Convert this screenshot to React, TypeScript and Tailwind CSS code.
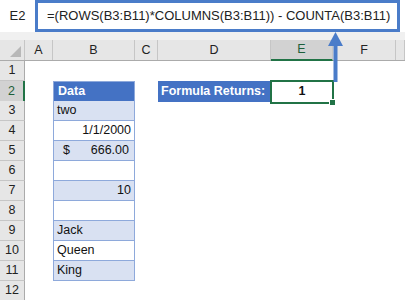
import React from 'react';

const COLS = 'grid grid-cols-[25px_28px_82px_23px_113px_62px_63px_1fr]';
const LETTERS = ['A', 'B', 'C', 'D', 'E', 'F', ''];

type Row = { n: number; b?: React.ReactNode; band?: boolean; head?: boolean };

const rows: Row[] = [
  { n: 1 },
  { n: 2, b: 'Data', head: true },
  { n: 3, b: <span className="pl-[3px]">two</span>, band: true },
  { n: 4, b: <span className="ml-auto pr-[3px]">1/1/2000</span> },
  {
    n: 5,
    b: (
      <span className="flex w-full pl-[9px] pr-[5px] justify-between">
        <span>$</span>
        <span>666.00</span>
      </span>
    ),
    band: true,
  },
  { n: 6, b: '' },
  { n: 7, b: <span className="ml-auto pr-[3px]">10</span>, band: true },
  { n: 8, b: '' },
  { n: 9, b: <span className="pl-[3px]">Jack</span>, band: true },
  { n: 10, b: <span className="pl-[3px]">Queen</span> },
  { n: 11, b: <span className="pl-[3px]">King</span>, band: true },
  { n: 12 },
];

export default function App() {
  return (
    <div className="relative w-[405px] h-[300px] overflow-hidden bg-white font-['Liberation_Sans',Arial,sans-serif] text-[12.5px] text-[#111]">
      {/* Formula bar */}
      <div className="flex h-[32px] bg-white">
        <div className="w-[35px] flex items-center justify-center text-[13px] text-[#222]">E2</div>
        <div className="flex-1 mr-[5px] border-[3px] border-[#4a7cc9] flex items-center pl-[9px] text-[13px] text-[#222] whitespace-nowrap">
          =(ROWS(B3:B11)*COLUMNS(B3:B11)) - COUNTA(B3:B11)
        </div>
      </div>
      <div className="h-[8px] bg-[#f0f0f0]" />

      {/* Column headers */}
      <div className={`${COLS} h-[21px] bg-[#e6e6e6] border-b border-[#ababab]`}>
        <div className="relative border-r border-[#c6c6c6]">
          <div className="absolute right-[3px] bottom-[3px] w-0 h-0 border-l-[11px] border-l-transparent border-b-[11px] border-b-[#b8b8b8]" />
        </div>
        {LETTERS.map((l, i) =>
          l === 'E' ? (
            <div
              key={i}
              className="flex items-center justify-center bg-[#d2d2d2] border-r border-[#c6c6c6] border-b-2 border-b-[#217346] -mb-px text-[#1d5f3a]"
            >
              {l}
            </div>
          ) : (
            <div key={i} className="flex items-center justify-center border-r border-[#c6c6c6] text-[#222]">
              {l}
            </div>
          )
        )}
      </div>

      {/* Rows */}
      {rows.map((r) => (
        <div key={r.n} className={`${COLS} h-[20px]`}>
          <div
            className={
              r.n === 2
                ? 'flex items-center justify-center bg-[#d2d2d2] border-b border-[#c6c6c6] border-r-2 border-r-[#217346] text-[#1d5f3a]'
                : 'flex items-center justify-center bg-[#e6e6e6] border-b border-[#c6c6c6] border-r border-r-[#ababab] text-[#222]'
            }
          >
            {r.n}
          </div>
          <div />
          {r.b !== undefined ? (
            r.head ? (
              <div className="flex items-center pl-[4px] bg-[#4472c4] text-white font-bold border border-[#8ea9db]">
                {r.b}
              </div>
            ) : (
              <div
                className={`flex items-center border-x border-b border-[#8ea9db] ${r.band ? 'bg-[#d9e1f2]' : 'bg-white'}`}
              >
                {r.b}
              </div>
            )
          ) : (
            <div />
          )}
          <div />
          {r.n === 2 ? (
            <div className="flex items-center pl-[3px] bg-[#4472c4] text-white font-bold whitespace-nowrap">
              Formula Returns:
            </div>
          ) : (
            <div />
          )}
          {r.n === 2 ? (
            <div className="relative flex items-center justify-center font-bold">
              1
              <div className="absolute -left-px -top-px -right-px -bottom-[2px] border-2 border-[#217346]" />
              <div className="absolute -right-[3px] -bottom-[4px] w-[5px] h-[5px] bg-[#217346] border border-white box-content" />
            </div>
          ) : (
            <div />
          )}
          <div />
          <div />
        </div>
      ))}

      {/* Arrow pointing from E2 to the formula */}
      <svg className="absolute left-[327px] top-[31px]" width="17" height="52" viewBox="0 0 17 52">
        <polygon points="8.5,1 16,15 1,15" fill="#4a7cc9" />
        <rect x="6.5" y="14" width="4" height="37" fill="#4a7cc9" />
      </svg>
    </div>
  );
}
